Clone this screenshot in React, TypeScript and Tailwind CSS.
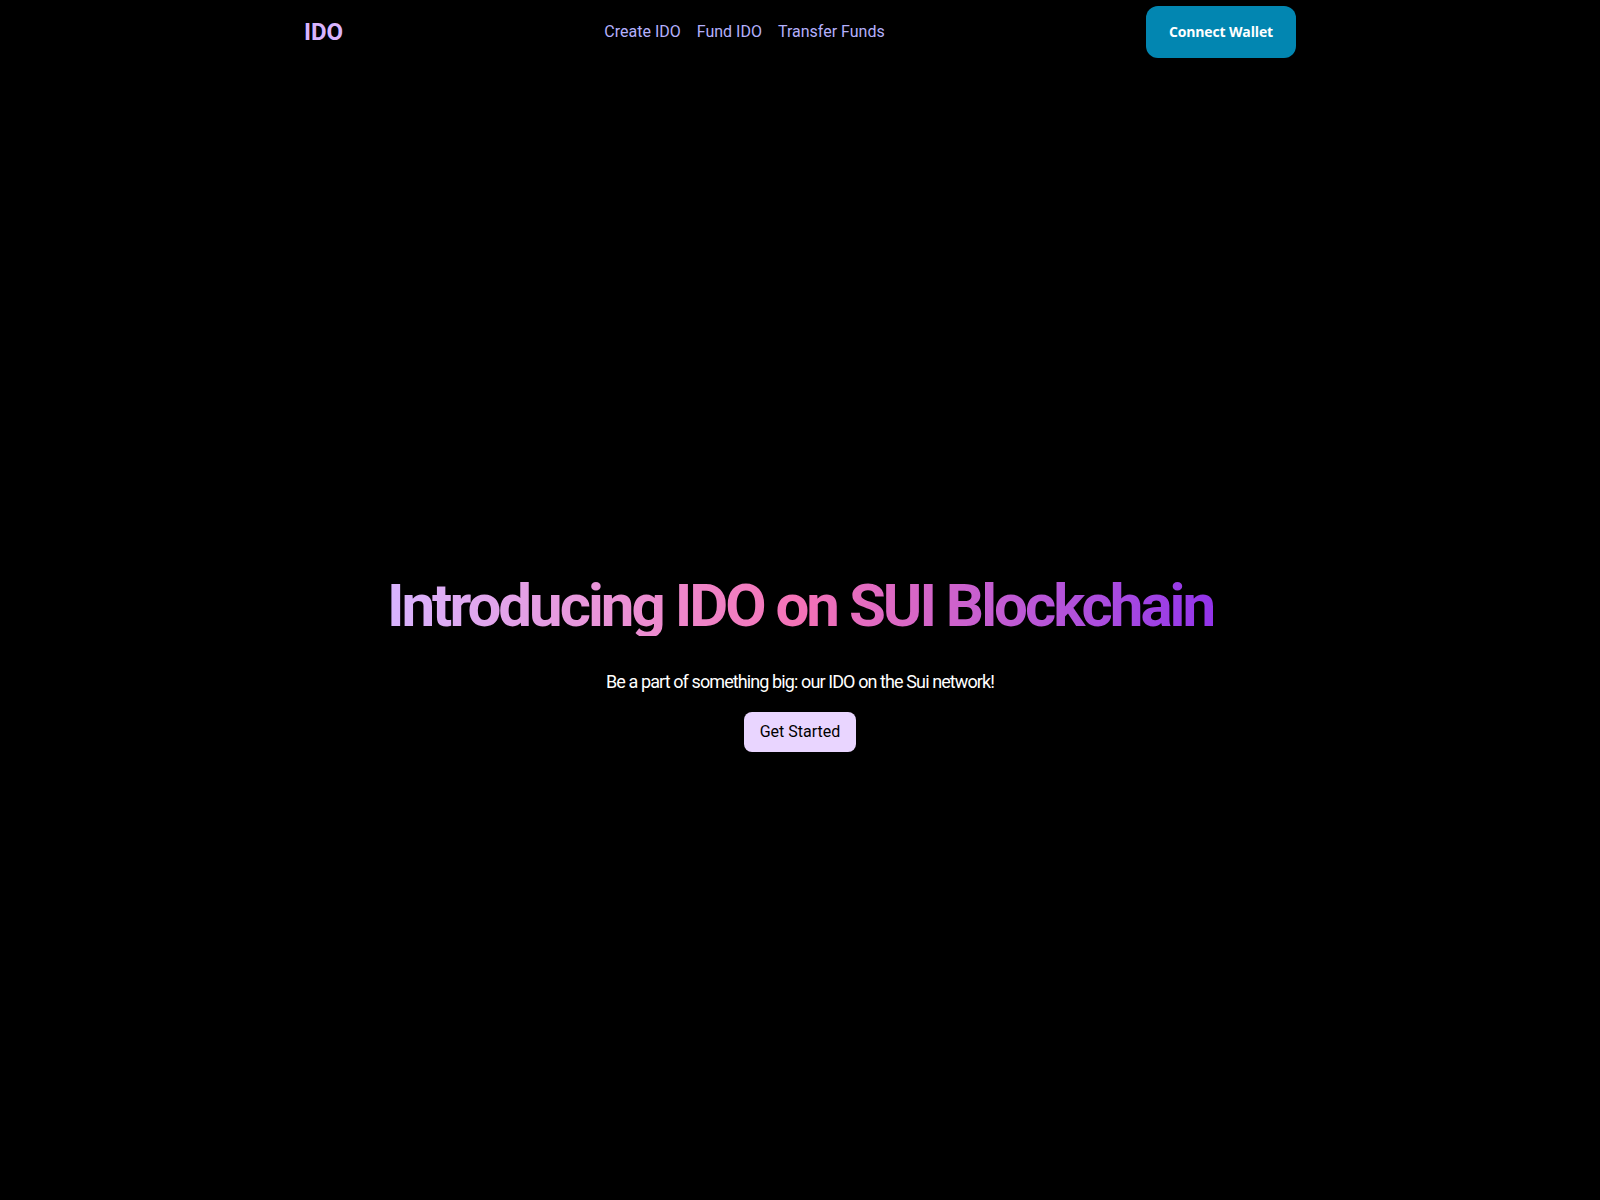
export default function App() {
  return (
    <div className="min-h-screen bg-black font-['Roboto',sans-serif]">
      {/* Navbar */}
      <nav className="max-w-5xl mx-auto px-4 py-1.5 flex items-center justify-between">
        <a href="#" className="text-2xl font-bold text-[#d8b4fe]">
          IDO
        </a>
        <div className="flex items-center gap-4 text-base text-[#b4b0fc]">
          <a href="#">Create IDO</a>
          <a href="#">Fund IDO</a>
          <a href="#">Transfer Funds</a>
        </div>
        <button className="h-[52px] bg-[#0286b1] text-white text-sm font-bold font-['Open_Sans',sans-serif] tracking-[-0.01em] px-[23px] rounded-xl">
          Connect Wallet
        </button>
      </nav>

      {/* Hero */}
      <section className="h-screen flex flex-col items-center justify-center text-center">
        <h1 className="text-6xl font-bold tracking-tighter bg-gradient-to-r from-[#d8b4fe] via-[#f472b6] to-[#9333ea] bg-clip-text text-transparent">
          Introducing IDO on SUI Blockchain
        </h1>
        <p className="mt-8 text-lg text-white tracking-tighter">
          Be a part of something big: our IDO on the Sui network!
        </p>
        <button className="mt-4 h-10 px-4 rounded-lg bg-[#e9d5ff] text-black text-base">
          Get Started
        </button>
      </section>
    </div>
  );
}
